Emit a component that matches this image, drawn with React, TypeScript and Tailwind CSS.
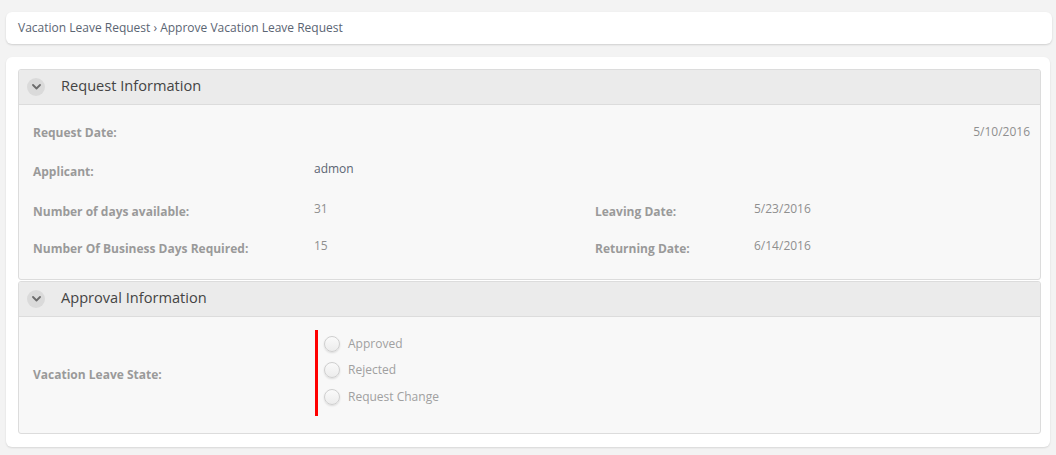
import React from "react";

const font = { fontFamily: '"Open Sans", "Liberation Sans", sans-serif' };

function Chevron() {
  return (
    <div className="w-[18px] h-[18px] rounded-full bg-[#dadada] flex items-center justify-center">
      <svg width="9" height="6" viewBox="0 0 9 6" fill="none">
        <path d="M1 1 L4.5 4.5 L8 1" stroke="#6b6b6b" strokeWidth="1.8" strokeLinecap="round" strokeLinejoin="round" />
      </svg>
    </div>
  );
}

function PanelHeader({ title }: { title: string }) {
  return (
    <div className="h-[35px] flex items-center bg-[#ebebeb] border-b border-[#dcdcdc] pl-[8px]">
      <Chevron />
      <span className="ml-[16px] mb-[3px] text-[14.6px] text-[#444]">{title}</span>
    </div>
  );
}

function Label({ children }: { children: React.ReactNode }) {
  return <span className="text-[12px] font-bold text-[#9a9a9a]">{children}</span>;
}

function Value({ children, dark }: { children: React.ReactNode; dark?: boolean }) {
  return (
    <span className={dark ? "text-[12px] text-[#5b6573] mb-[2px]" : "text-[12px] text-[#8f8f8f] mb-[2px]"}>
      {children}
    </span>
  );
}

function Radio({ label }: { label: string }) {
  return (
    <div className="flex items-center h-[26.5px]">
      <div className="w-[16px] h-[16px] rounded-full border border-[#cfcfcf] bg-gradient-to-b from-[#fafafa] to-[#ececec] shadow-[0_1px_2px_rgba(0,0,0,0.12)]" />
      <span className="ml-[8px] text-[12px] text-[#a0a0a0]">{label}</span>
    </div>
  );
}

export default function App() {
  return (
    <div className="min-h-[455px] bg-[#f3f3f3] pt-[12px] pl-[6px] pr-[4px]" style={font}>
      <div className="h-[32px] bg-white rounded-[6px] shadow-[0_1px_2px_rgba(0,0,0,0.15)] flex items-center pl-[12px]">
        <span className="text-[12px] text-[#5b6573]">Vacation Leave Request › Approve Vacation Leave Request</span>
      </div>
      <div className="mt-[13px] mr-[2px] bg-white rounded-[6px] shadow-[0_1px_2px_rgba(0,0,0,0.12)] pt-[12px] pl-[12px] pr-[9px] pb-[13px]">
        <div className="border border-[#dcdcdc] rounded-[3px] bg-[#f8f8f8] overflow-hidden">
          <PanelHeader title="Request Information" />
          <div className="pl-[14px] pr-[10px] pt-[10px] pb-[15px]">
            <div className="flex items-center h-[36px]">
              <Label>Request Date:</Label>
              <div className="flex-1" />
              <Value>5/10/2016</Value>
            </div>
            <div className="flex items-center h-[38px]">
              <div className="w-[281px]"><Label>Applicant:</Label></div>
              <Value dark>admon</Value>
            </div>
            <div className="flex items-center h-[41px]">
              <div className="w-[281px]"><Label>Number of days available:</Label></div>
              <div className="w-[281px] flex items-center"><Value>31</Value></div>
              <div className="w-[159px]"><Label>Leaving Date:</Label></div>
              <Value>5/23/2016</Value>
            </div>
            <div className="flex items-center h-[34px]">
              <div className="w-[281px]"><Label>Number Of Business Days Required:</Label></div>
              <div className="w-[281px] flex items-center"><Value>15</Value></div>
              <div className="w-[159px]"><Label>Returning Date:</Label></div>
              <Value>6/14/2016</Value>
            </div>
          </div>
        </div>
        <div className="mt-[1px] border border-[#dcdcdc] rounded-[3px] bg-[#f8f8f8] overflow-hidden">
          <PanelHeader title="Approval Information" />
          <div className="pl-[14px] pt-[13px] pb-[17px] flex items-center">
            <div className="w-[282px]"><Label>Vacation Leave State:</Label></div>
            <div className="border-l-[3px] border-[#ff0000] h-[86px] pl-[6px] pb-[6px] flex flex-col justify-center">
              <Radio label="Approved" />
              <Radio label="Rejected" />
              <Radio label="Request Change" />
            </div>
          </div>
        </div>
      </div>
    </div>
  );
}
